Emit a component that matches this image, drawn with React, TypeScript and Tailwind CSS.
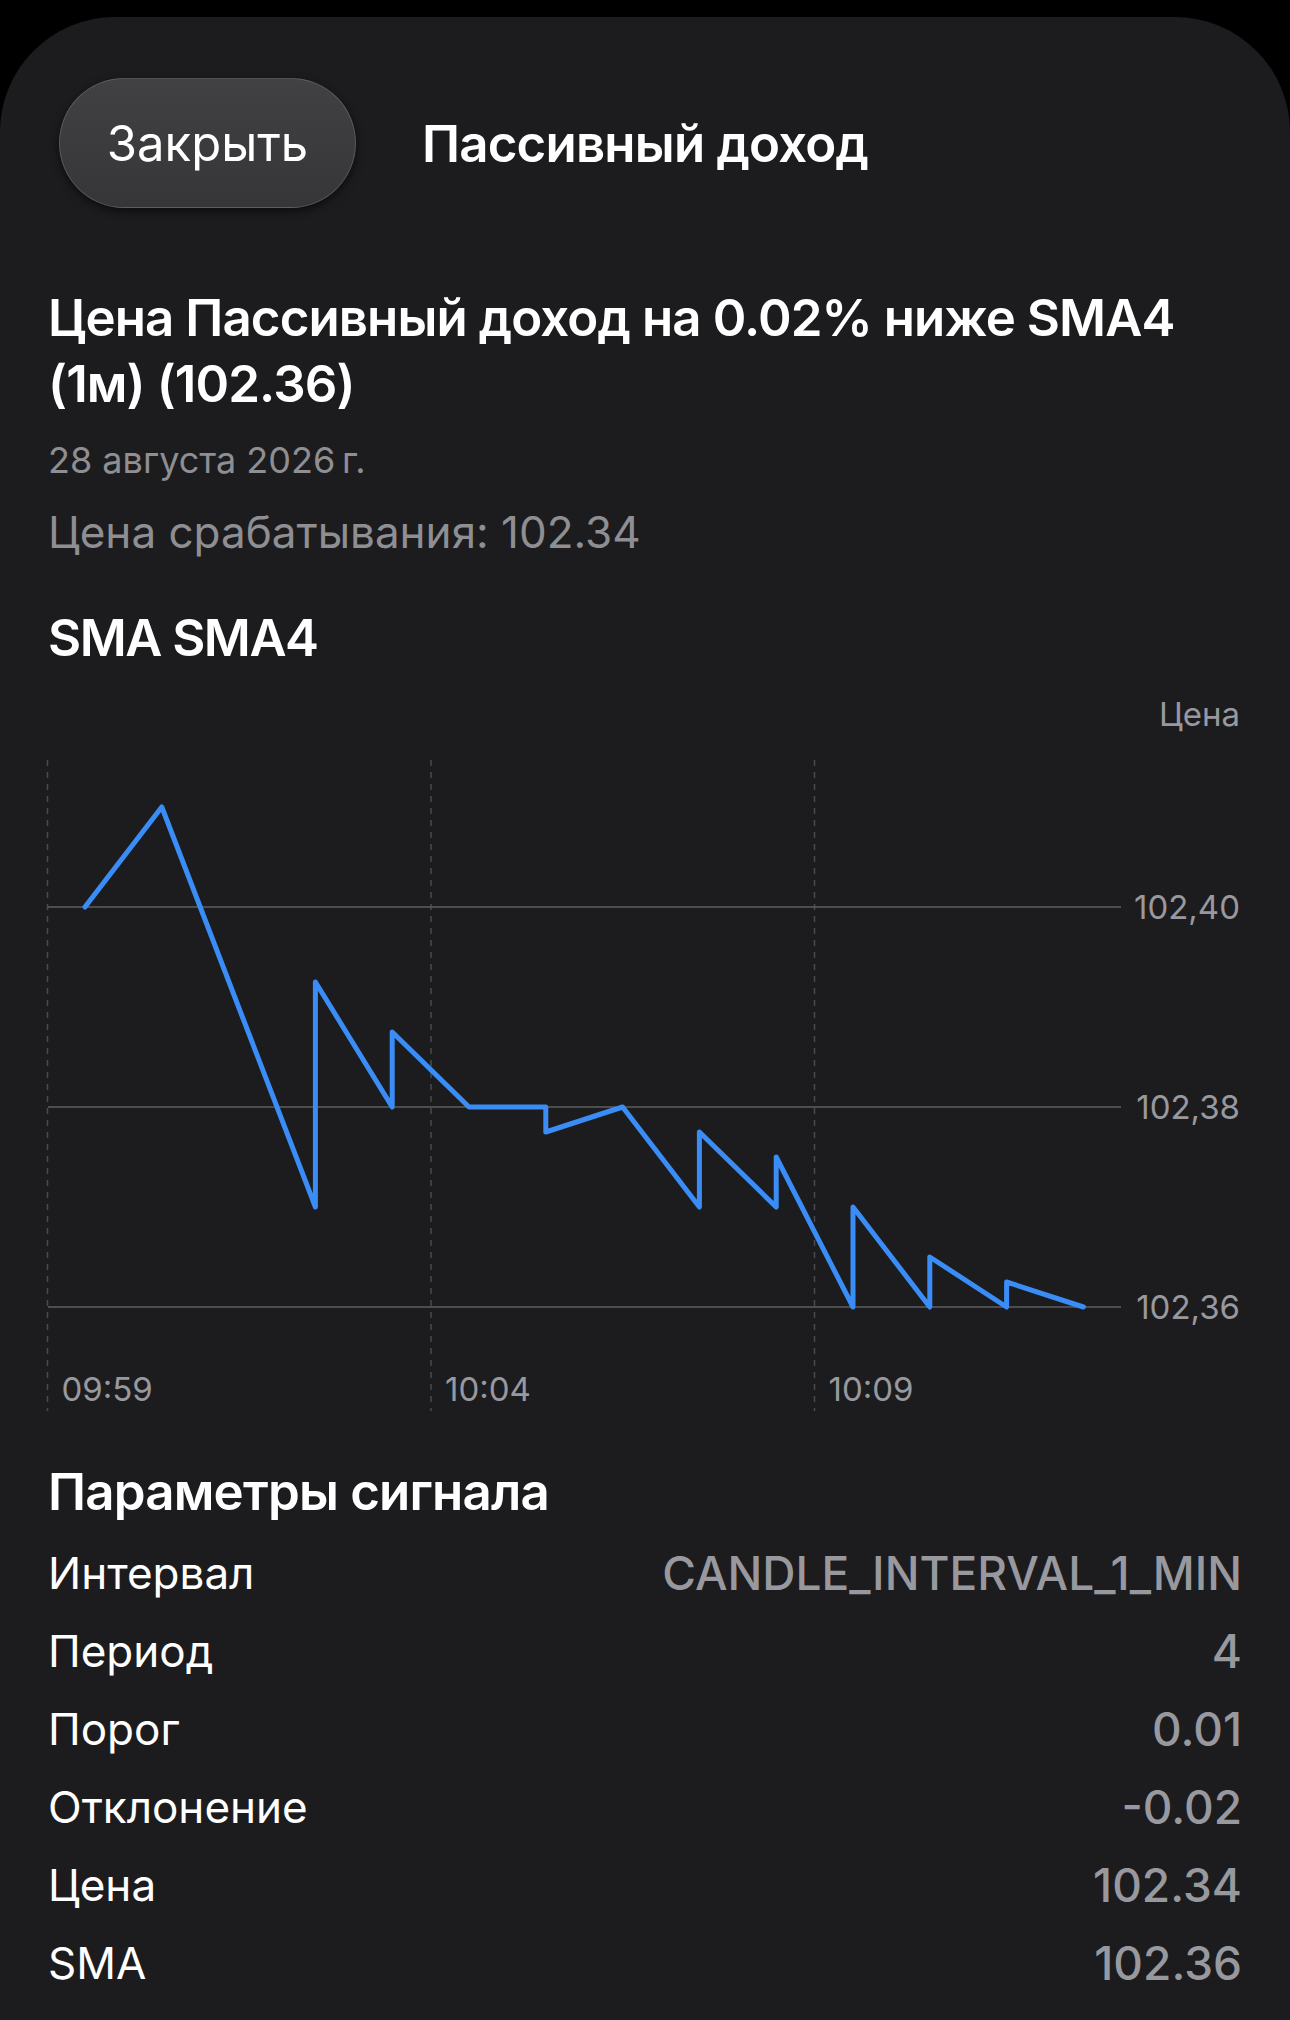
const points: [number, number][] = [
  [0, 102.4],
  [1, 102.41],
  [3, 102.37],
  [3, 102.3925],
  [4, 102.38],
  [4, 102.3875],
  [5, 102.38],
  [6, 102.38],
  [6, 102.3775],
  [7, 102.38],
  [8, 102.37],
  [8, 102.3775],
  [9, 102.37],
  [9, 102.375],
  [10, 102.36],
  [10, 102.37],
  [11, 102.36],
  [11, 102.365],
  [12, 102.36],
  [12, 102.3625],
  [13, 102.36],
]

const params = [
  ['Интервал', 'CANDLE_INTERVAL_1_MIN'],
  ['Период', '4'],
  ['Порог', '0.01'],
  ['Отклонение', '-0.02'],
  ['Цена', '102.34'],
  ['SMA', '102.36'],
]

// chart coords: svg starts at page x 48, y 671
const px = (i: number) => 37 + 76.8 * i
const py = (v: number) => 236 + (102.4 - v) * 10000

function SmaChart() {
  const grid = [
    { y: 236, label: '102,40' },
    { y: 436, label: '102,38' },
    { y: 636, label: '102,36' },
  ]
  const ticks = [
    { x: -0.5, label: '09:59' },
    { x: 383, label: '10:04' },
    { x: 766.5, label: '10:09' },
  ]
  const d = points.map(([i, v], k) => `${k ? 'L' : 'M'}${px(i).toFixed(1)} ${py(v).toFixed(1)}`).join(' ')

  return (
    <svg width="1194" height="749" viewBox="0 0 1194 749" className="block overflow-visible">
      <text x="1192" y="55" textAnchor="end" className="fill-[#98989f] text-[33px]">
        Цена
      </text>

      {ticks.map((t) => (
        <g key={t.label}>
          <line x1={t.x} y1="89" x2={t.x} y2="740" stroke="#4a4a4e" strokeWidth="1.5" strokeDasharray="6 6" />
          <text x={t.x + 14} y="730" className="fill-[#98989f] text-[33px]">
            {t.label}
          </text>
        </g>
      ))}

      {grid.map((g) => (
        <g key={g.label}>
          <line x1="0" y1={g.y} x2="1073" y2={g.y} stroke="#5e5e62" strokeWidth="1.5" />
          <text x="1192" y={g.y + 12} textAnchor="end" className="fill-[#98989f] text-[33px]">
            {g.label}
          </text>
        </g>
      ))}

      <path d={d} fill="none" stroke="#3a8cf6" strokeWidth="5" strokeLinejoin="round" strokeLinecap="round" />
    </svg>
  )
}

export default function App() {
  return (
    <div className="min-h-[2020px] bg-black pt-[17px] font-['Inter',sans-serif] text-white antialiased">
      <div className="min-h-[2003px] rounded-t-[115px] bg-[#1c1c1e] px-[48px] pb-[18px]">
        <div className="flex items-center pt-[61px] pl-[11px]">
          <button
            type="button"
            className="h-[130px] w-[297px] rounded-full border border-white/15 bg-gradient-to-b from-[#414144] to-[#363638] text-[49px] leading-none text-white shadow-[0_3px_8px_rgba(0,0,0,0.6)]"
          >
            Закрыть
          </button>
          <h1 className="ml-[66px] text-[51px] font-semibold leading-none tracking-[-0.8px]">Пассивный доход</h1>
        </div>

        <h2 className="mt-[77px] text-[51px] font-semibold leading-[66px] tracking-[-0.9px]">
          Цена Пассивный доход на 0.02% ниже SMA4 (1м) (102.36)
        </h2>
        <p className="mt-[19px] text-[36px] leading-[48px] text-[#8e8e93]">28 августа 2026{'\u202F'}г.</p>
        <p className="mt-[18px] text-[44px] leading-[60px] text-[#8e8e93]">Цена срабатывания: 102.34</p>

        <h3 className="mt-[43px] text-[51px] font-semibold leading-[66px] tracking-[-1.5px]">SMA SMA4</h3>
        <SmaChart />

        <h3 className="mt-[39px] text-[51px] font-semibold leading-[66px] tracking-[-0.8px]">Параметры сигнала</h3>
        <div className="mt-[9px] flex flex-col">
          {params.map(([k, v]) => (
            <div key={k} className="flex h-[78px] items-center justify-between">
              <span className="text-[44px]">{k}</span>
              <span className="text-[46px] font-medium text-[#98989f]">{v}</span>
            </div>
          ))}
        </div>
      </div>
    </div>
  )
}
